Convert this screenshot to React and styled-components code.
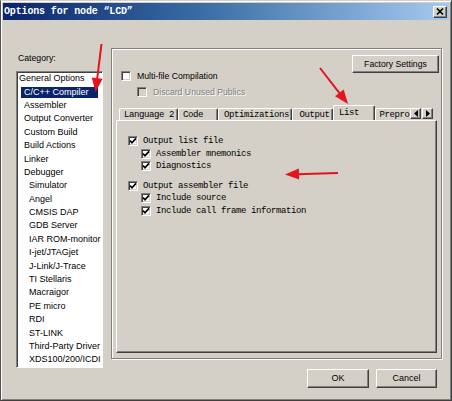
import React from 'react';
import styled, { createGlobalStyle, css } from 'styled-components';

const Global = createGlobalStyle`
  html, body { margin: 0; padding: 0; background: #d4d0c8; }
  body { width: 452px; height: 401px; overflow: hidden; font-family: "Liberation Sans", Arial, sans-serif; }
`;

const raised = css`
  border: 1px solid;
  border-color: #fff #404040 #404040 #fff;
  box-shadow: inset -1px -1px 0 #808080;
`;

const Window = styled.div`
  position: relative;
  box-sizing: border-box;
  width: 452px;
  height: 401px;
  background: #d4d0c8;
  border: 1px solid;
  border-color: #d4d0c8 #404040 #404040 #505050;
  box-shadow: inset 1px 1px 0 #fff, inset -1px -1px 0 #808080;
  padding: 2px 2px 0 2px;
  display: flex;
  flex-direction: column;
`;

const TitleBar = styled.div`
  height: 17px;
  flex: none;
  display: flex;
  align-items: center;
  justify-content: space-between;
  padding-left: 1px;
  background: linear-gradient(90deg, #0a246a 0%, #3a6ea5 45%, #a6caf0 100%);
`;

const TitleText = styled.span`
  font-family: "Liberation Mono", "DejaVu Sans Mono", monospace;
  font-weight: bold;
  font-size: 10px;
  letter-spacing: -0.15px;
  color: #fff;
`;

const CloseButton = styled.div`
  ${raised};
  box-sizing: border-box;
  width: 14px;
  height: 12px;
  margin-right: 2px;
  background: #d4d0c8;
  display: flex;
  align-items: center;
  justify-content: center;
`;

const Body = styled.div`
  flex: 1;
  display: flex;
  flex-direction: column;
  padding: 28px 12px 0 13px;
`;

const MainRow = styled.div`
  display: flex;
  align-items: flex-start;
`;

const LeftCol = styled.div`
  width: 87px;
  flex: none;
`;

const Label = styled.div`
  font-size: 8.7px;
  line-height: 12px;
  margin: 4px 0 7px 2px;
  color: #000;
`;

const ListBox = styled.div`
  box-sizing: border-box;
  width: 87px;
  background: #fff;
  border: 1px solid;
  border-color: #808080 #fff #fff #808080;
  box-shadow: inset 1px 1px 0 #404040;
`;

const Item = styled.div`
  height: 13.4px;
  line-height: 13.4px;
  padding-left: ${p => p.$pad}px;
  white-space: nowrap;
  font-size: 9px;
  color: #000;
  display: flex;
  align-items: center;
`;

const ItemText = styled.span`
  display: inline-block;
  line-height: 11px;
  ${p => p.$selected && css`
    background: #0a246a;
    color: #fff;
    padding: 0 9px 0 3px;
    margin-left: -3px;
  `}
`;

const Panel = styled.div`
  box-sizing: border-box;
  width: 331px;
  margin-left: 8px;
  border: 1px solid #808080;
  box-shadow: inset 1px 1px 0 #fff, 1px 1px 0 #fff;
  padding: 0 4px 5px 4px;
`;

const HeaderRow = styled.div`
  height: 51px;
  display: flex;
  justify-content: space-between;
  align-items: flex-start;
`;

const OptionList = styled.div`
  padding-top: 19px;
`;

const OptRow = styled.div`
  height: 16px;
  display: flex;
  align-items: center;
  gap: 6px;
  padding-left: ${p => p.$indent}px;
  font-size: 8.7px;
  color: ${p => (p.$disabled ? '#808080' : '#000')};
  text-shadow: ${p => (p.$disabled ? '1px 1px 0 #fff' : 'none')};
`;

const Box = styled.span`
  box-sizing: border-box;
  flex: none;
  width: 10px;
  height: 10px;
  background: ${p => (p.$disabled ? '#d4d0c8' : '#fff')};
  border: 1px solid;
  border-color: #808080 #fff #fff #808080;
  box-shadow: inset 1px 1px 0 #404040, inset -1px -1px 0 #d4d0c8;
  display: flex;
  align-items: center;
  justify-content: center;
`;

const PushButton = styled.button`
  ${raised};
  box-sizing: border-box;
  width: ${p => p.$w}px;
  height: ${p => p.$h}px;
  background: #d4d0c8;
  font-family: "Liberation Sans", Arial, sans-serif;
  font-size: ${p => p.$fs}px;
  color: #000;
  padding: 0;
  margin: 0;
  display: flex;
  align-items: center;
  justify-content: center;
`;

const FactoryButton = styled(PushButton)`
  margin-top: 6px;
  margin-right: -2px;
`;

const TabStrip = styled.div`
  height: 20px;
  display: flex;
  align-items: flex-end;
`;

const TabList = styled.div`
  flex: 1;
  height: 100%;
  display: flex;
  align-items: flex-end;
  overflow: hidden;
  padding-left: 3px;
  position: relative;
  z-index: 1;
`;

const Tab = styled.div`
  box-sizing: border-box;
  flex: none;
  width: ${p => p.$w}px;
  height: ${p => (p.$active ? 16 : 12)}px;
  margin-bottom: ${p => (p.$active ? -1 : 0)}px;
  padding-left: ${p => p.$pad}px;
  background: #d4d0c8;
  border-top: 1px solid #fff;
  border-left: 1px solid #fff;
  border-right: 1px solid #404040;
  box-shadow: inset -1px 0 0 #808080;
  border-radius: 2px 2px 0 0;
  font-family: "Liberation Mono", "DejaVu Sans Mono", monospace;
  font-size: 9px;
  letter-spacing: -0.4px;
  color: #000;
  white-space: nowrap;
  display: flex;
  align-items: ${p => (p.$active ? 'flex-start' : 'center')};
  padding-top: ${p => (p.$active ? 2 : 0)}px;
`;

const ScrollArrows = styled.div`
  display: flex;
  gap: 1px;
  margin: 0 4px 1px 0;
  flex: none;
`;

const ArrowButton = styled.div`
  ${raised};
  box-sizing: border-box;
  width: 11px;
  height: 11px;
  background: #d4d0c8;
  display: flex;
  align-items: center;
  justify-content: center;
`;

const TabPage = styled.div`
  box-sizing: border-box;
  height: 233px;
  border: 1px solid;
  border-color: #fff #404040 #404040 #fff;
  box-shadow: inset -1px -1px 0 #808080;
  padding: 14px 0 0 11px;
`;

const Group = styled.div`
  margin-top: ${p => p.$gap}px;
`;

const CheckRow = styled.div`
  height: 12.6px;
  display: flex;
  align-items: center;
  gap: 5px;
  padding-left: ${p => p.$indent}px;
  font-family: "Liberation Mono", "DejaVu Sans Mono", monospace;
  font-size: 9px;
  letter-spacing: -0.4px;
  color: #000;
  white-space: nowrap;
`;

const ButtonRow = styled.div`
  display: flex;
  justify-content: flex-end;
  gap: 7px;
  margin-top: 1px;
`;

const Overlay = styled.svg`
  position: absolute;
  left: -1px;
  top: -1px;
  pointer-events: none;
`;

const Check = () => (
  <svg width="8" height="8" viewBox="0 0 8 8">
    <path d="M1 3.6 L3 5.8 L7 1.4" fill="none" stroke="#000" strokeWidth="1.7" />
  </svg>
);

const CheckBox = ({ checked, disabled }) => (
  <Box $disabled={disabled}>{checked && <Check />}</Box>
);

const Arrow = ({ from, to }) => {
  const [x1, y1] = from;
  const [x2, y2] = to;
  const dx = x2 - x1;
  const dy = y2 - y1;
  const len = Math.hypot(dx, dy);
  const ux = dx / len;
  const uy = dy / len;
  const L = 14;
  const W = 5.5;
  const bx = x2 - ux * L;
  const by = y2 - uy * L;
  const pts = `${x2},${y2} ${bx - uy * W},${by + ux * W} ${bx + uy * W},${by - ux * W}`;
  return (
    <g>
      <line x1={x1} y1={y1} x2={bx + ux * 2} y2={by + uy * 2} stroke="#e3141c" strokeWidth="2" />
      <polygon points={pts} fill="#e3141c" />
    </g>
  );
};

const categories = [
  ['General Options', 2],
  ['C/C++ Compiler', 7, true],
  ['Assembler', 7],
  ['Output Converter', 7],
  ['Custom Build', 7],
  ['Build Actions', 7],
  ['Linker', 7],
  ['Debugger', 7],
  ['Simulator', 12],
  ['Angel', 12],
  ['CMSIS DAP', 12],
  ['GDB Server', 12],
  ['IAR ROM-monitor', 12],
  ['I-jet/JTAGjet', 12],
  ['J-Link/J-Trace', 12],
  ['TI Stellaris', 12],
  ['Macraigor', 12],
  ['PE micro', 12],
  ['RDI', 12],
  ['ST-LINK', 12],
  ['Third-Party Driver', 12],
  ['XDS100/200/ICDI', 12],
];

const tabs = [
  ['Language 2', 59, 4],
  ['Code', 40, 4],
  ['Optimizations', 73.5, 5],
  ['Output', 41.5, 7],
  ['List', 41.5, 5, true],
  ['Prepro', 60, 4],
];

export default function App() {
  return (
    <>
      <Global />
      <Window>
        <TitleBar>
          <TitleText>Options for node “LCD”</TitleText>
          <CloseButton>
            <svg width="8" height="7" viewBox="0 0 8 7">
              <path d="M1 0.5 L7 6.5 M7 0.5 L1 6.5" stroke="#000" strokeWidth="1.6" />
            </svg>
          </CloseButton>
        </TitleBar>
        <Body>
          <MainRow>
            <LeftCol>
              <Label>Category:</Label>
              <ListBox>
                {categories.map(([name, pad, sel]) => (
                  <Item key={name} $pad={pad}>
                    <ItemText $selected={sel}>{name}</ItemText>
                  </Item>
                ))}
              </ListBox>
            </LeftCol>
            <Panel>
              <HeaderRow>
                <OptionList>
                  <OptRow $indent={5}>
                    <CheckBox />
                    <span>Multi-file Compilation</span>
                  </OptRow>
                  <OptRow $indent={21} $disabled>
                    <CheckBox disabled />
                    <span>Discard Unused Publics</span>
                  </OptRow>
                </OptionList>
                <FactoryButton $w={87} $h={18} $fs={8.7}>Factory Settings</FactoryButton>
              </HeaderRow>
              <TabStrip>
                <TabList>
                  {tabs.map(([name, w, pad, active]) => (
                    <Tab key={name} $w={w} $pad={pad} $active={active}>{name}</Tab>
                  ))}
                </TabList>
                <ScrollArrows>
                  <ArrowButton>
                    <svg width="4" height="7" viewBox="0 0 4 7"><path d="M4 0 L0 3.5 L4 7 Z" fill="#000" /></svg>
                  </ArrowButton>
                  <ArrowButton>
                    <svg width="4" height="7" viewBox="0 0 4 7"><path d="M0 0 L4 3.5 L0 7 Z" fill="#000" /></svg>
                  </ArrowButton>
                </ScrollArrows>
              </TabStrip>
              <TabPage>
                <Group $gap={0}>
                  <CheckRow $indent={0}><CheckBox checked /><span>Output list file</span></CheckRow>
                  <CheckRow $indent={13}><CheckBox checked /><span>Assembler mnemonics</span></CheckRow>
                  <CheckRow $indent={13}><CheckBox checked /><span>Diagnostics</span></CheckRow>
                </Group>
                <Group $gap={6.7}>
                  <CheckRow $indent={0}><CheckBox checked /><span>Output assembler file</span></CheckRow>
                  <CheckRow $indent={13}><CheckBox checked /><span>Include source</span></CheckRow>
                  <CheckRow $indent={13}><CheckBox checked /><span>Include call frame information</span></CheckRow>
                </Group>
              </TabPage>
            </Panel>
          </MainRow>
          <ButtonRow>
            <PushButton $w={62} $h={19} $fs={9}>OK</PushButton>
            <PushButton $w={61} $h={19} $fs={9}>Cancel</PushButton>
          </ButtonRow>
        </Body>
        <Overlay width="452" height="401" viewBox="0 0 452 401">
          <Arrow from={[101.5, 44]} to={[95.5, 92]} />
          <Arrow from={[320, 68]} to={[348, 104]} />
          <Arrow from={[338, 173]} to={[285, 174.5]} />
        </Overlay>
      </Window>
    </>
  );
}
